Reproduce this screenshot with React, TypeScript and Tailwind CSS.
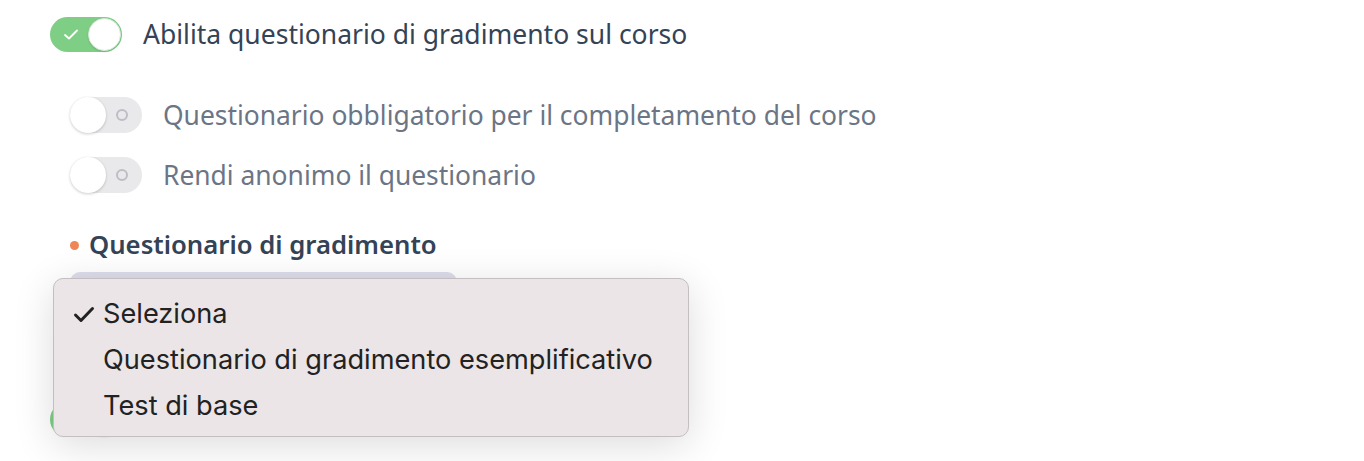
import React from "react";

function Toggle({ on }: { on: boolean }) {
  if (on) {
    return (
      <div className="relative w-[72px] h-[35px] rounded-full bg-[#7fce86] shrink-0">
        <svg className="absolute left-[13px] top-[11px]" width="16" height="13" viewBox="0 0 16 13" fill="none">
          <path d="M2 7 L6 10.5 L14 2.5" stroke="white" strokeWidth="1.8" strokeLinecap="round" strokeLinejoin="round" />
        </svg>
        <div className="absolute right-[1px] top-[1px] w-[33px] h-[33px] rounded-full bg-white border border-[#d6e9d8] shadow-[0_1px_2px_rgba(0,0,0,0.12)]" />
      </div>
    );
  }
  return (
    <div className="relative w-[72px] h-[36px] rounded-full bg-[#e9e9ec] shrink-0">
      <div className="absolute right-[14px] top-[12px] w-[12px] h-[12px] rounded-full border-2 border-[#bdbdc4]" />
      <div className="absolute left-0 top-0 w-[36px] h-[36px] rounded-full bg-white shadow-[0_1px_3px_rgba(0,0,0,0.2)]" />
    </div>
  );
}

export default function App() {
  return (
    <div
      className="relative w-[1364px] h-[461px] bg-white overflow-hidden"
      style={{ fontFamily: "'Noto Sans', Lato, sans-serif" }}
    >
      <div className="pl-[50px] pt-[17px] flex flex-col">
        <div className="flex items-center gap-[21px] h-[35px]">
          <Toggle on />
          <span className="text-[26.5px] leading-[35px] text-[#344356]">Abilita questionario di gradimento sul corso</span>
        </div>

        <div className="pl-[20px] pt-[45px] flex flex-col gap-[24px]">
          <div className="flex items-center gap-[21px] h-[36px]">
            <Toggle on={false} />
            <span className="text-[26.4px] leading-[36px] text-[#6b7585]">Questionario obbligatorio per il completamento del corso</span>
          </div>
          <div className="flex items-center gap-[21px] h-[36px]">
            <Toggle on={false} />
            <span className="text-[26.4px] leading-[36px] text-[#6b7585]">Rendi anonimo il questionario</span>
          </div>
        </div>

        <div className="pl-[20px] pt-[37px] flex items-center gap-[10px] h-[67px]">
          <span className="w-[9px] h-[9px] rounded-full bg-[#ef8657]" />
          <span className="text-[25.7px] leading-[30px] font-semibold text-[#344356]">Questionario di gradimento</span>
        </div>

        <div className="ml-[20px] mt-[12px] w-[387px] h-[44px] rounded-[10px] bg-[#dcdcec]" />

        <div className="mt-[86px]">
          <Toggle on />
        </div>
      </div>

      <div
        className="absolute left-[53px] top-[278px] w-[636px] h-[159px] rounded-[10px] bg-[#ebe5e7] border border-[#c3bfc1] shadow-[0_8px_40px_rgba(0,0,0,0.14)] pt-[12px] flex flex-col text-[27.2px] text-[#222222]"
        style={{ fontFamily: "Inter, 'Noto Sans', sans-serif" }}
      >
        <div className="flex items-center h-[46px]">
          <span className="w-[49px] pl-[19px] flex items-center">
            <svg width="22" height="17" viewBox="0 0 22 17" fill="none">
              <path d="M2.5 9 L8 14.5 L19.5 2.5" stroke="#222222" strokeWidth="3" strokeLinecap="round" strokeLinejoin="round" />
            </svg>
          </span>
          <span>Seleziona</span>
        </div>
        <div className="flex items-center h-[46px]">
          <span className="w-[49px]" />
          <span>Questionario di gradimento esemplificativo</span>
        </div>
        <div className="flex items-center h-[46px]">
          <span className="w-[49px]" />
          <span>Test di base</span>
        </div>
      </div>
    </div>
  );
}
